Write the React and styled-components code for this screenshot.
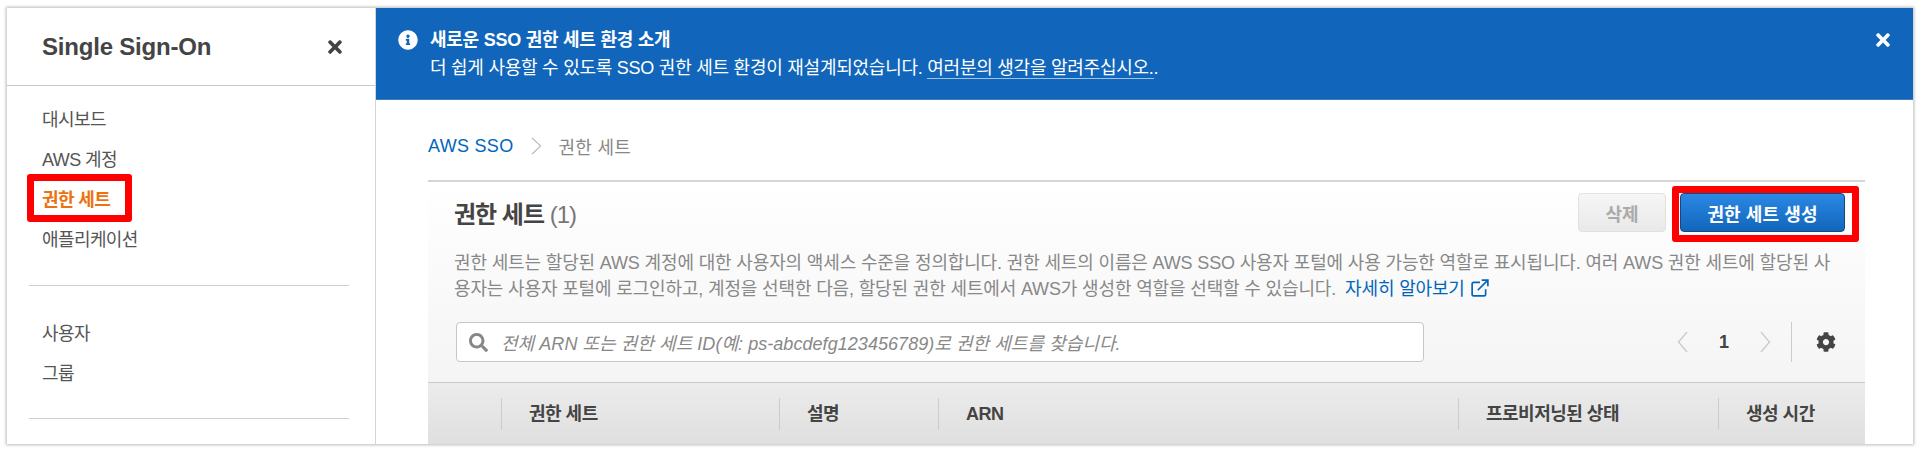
import React from 'react'
import styled, { createGlobalStyle } from 'styled-components'
import { FaTimes, FaInfoCircle, FaSearch, FaCog } from 'react-icons/fa'

const Global = createGlobalStyle`
  html, body {
    margin: 0;
    background: #fff;
  }
  body {
    font-family: "Liberation Sans", "Noto Sans CJK KR", sans-serif;
    color: #444;
  }
`

const Page = styled.div`
  height: 452px;
  padding: 8px 7px;
  box-sizing: border-box;
  overflow: hidden;
`

const Frame = styled.div`
  display: flex;
  height: 436px;
  overflow: hidden;
  box-shadow: 0 0 3px 1px #bbb;
`

const Sidebar = styled.aside`
  width: 368px;
  flex: none;
  border-right: 1px solid #d5d5d5;
`

const SideHeader = styled.div`
  display: flex;
  align-items: center;
  justify-content: space-between;
  height: 78px;
  padding: 0 30px 0 35px;
  box-sizing: border-box;
  border-bottom: 1px solid #c9c9c9;
  color: #444;
  font-size: 24px;
  font-weight: bold;
  letter-spacing: -0.2px;
`

const NavGroup = styled.ul`
  list-style: none;
  margin: 0 26px 0 22px;
  padding: 28px 0 24px;
  border-bottom: 1px solid #d0d0d0;
  &:first-of-type {
    padding: 14px 0 25px;
  }
`

const NavItem = styled.li`
  position: relative;
  height: 40px;
  line-height: 40px;
  padding-left: 13px;
  font-size: 18px;
  letter-spacing: -0.6px;
  color: ${p => (p.$active ? '#ec7211' : '#555')};
  font-weight: ${p => (p.$active ? 'bold' : 'normal')};
  ${p => p.$active && `
    &::after {
      content: '';
      position: absolute;
      left: -2px;
      top: -6px;
      width: 105px;
      height: 48px;
      box-sizing: border-box;
      border: 7px solid #f00;
      border-radius: 3px;
    }
  `}
`

const Main = styled.main`
  flex: 1;
  min-width: 0;
`

const Banner = styled.div`
  display: flex;
  height: 92px;
  box-sizing: border-box;
  padding: 22px 20px 0 22px;
  background: #1166bb;
  border-bottom: 1px solid #3b7dbd;
  color: #fff;
  font-size: 18px;
`

const BannerIcon = styled.div`
  flex: none;
  width: 32px;
  height: 20px;
  font-size: 20px;
  line-height: 20px;
`

const BannerText = styled.div`
  flex: 1;
  line-height: 20px;
  letter-spacing: -0.25px;
`

const BannerTitle = styled.div`
  font-weight: bold;
  margin-bottom: 8px;
`

const BannerLink = styled.span`
  border-bottom: 1px solid #9cc3e8;
`

const Content = styled.div`
  padding: 0 48px 0 52px;
`

const Breadcrumbs = styled.nav`
  display: flex;
  align-items: center;
  height: 80px;
  padding-top: 12px;
  box-sizing: border-box;
  font-size: 18px;
  letter-spacing: 0.3px;
`

const Crumb = styled.span`
  color: ${p => (p.$link ? '#0066bb' : '#888')};
`

const CrumbSep = styled.span`
  display: flex;
  margin: 0 16px 0 18px;
`

const Panel = styled.section`
  border-top: 2px solid #d5d5d5;
  background: linear-gradient(#fff, #f1f1f1);
`

const PanelBody = styled.div`
  padding: 11px 20px 20px 26px;
  border-bottom: 1px solid #c9c9c9;
`

const TitleRow = styled.div`
  display: flex;
  align-items: center;
  height: 39px;
`

const PanelTitle = styled.h2`
  flex: 1;
  margin: 0;
  font-size: 24px;
  font-weight: bold;
  color: #444;
  letter-spacing: -1px;
`

const Count = styled.span`
  font-weight: normal;
  color: #777;
`

const Button = styled.button`
  position: relative;
  height: 39px;
  padding: 0;
  border-radius: 4px;
  font-family: inherit;
  font-size: 18px;
  font-weight: bold;
`

const DeleteButton = styled(Button)`
  width: 88px;
  margin-right: 14px;
  color: #aaa;
  border: 1px solid #e1e1e1;
  background: linear-gradient(#f6f6f6, #e9e9e9);
`

const CreateButton = styled(Button)`
  width: 165px;
  color: #fff;
  border: 1px solid #0d4a87;
  background: linear-gradient(#2b88e4, #1166bb);
  letter-spacing: 0.1px;
  &::after {
    content: '';
    position: absolute;
    left: -9px;
    top: -8px;
    right: -15px;
    bottom: -11px;
    border: 7px solid #f00;
    border-radius: 3px;
  }
`

const Description = styled.p`
  margin: 18px 0 0;
  font-size: 18px;
  line-height: 26px;
  color: #888;
  white-space: nowrap;
  letter-spacing: -0.15px;
`

const MoreLink = styled.span`
  margin-left: 9px;
  color: #0066bb;
`

const ToolRow = styled.div`
  display: flex;
  align-items: center;
  margin: 20px 0 0 2px;
  height: 40px;
`

const Search = styled.div`
  display: flex;
  align-items: center;
  width: 968px;
  height: 40px;
  box-sizing: border-box;
  padding-left: 12px;
  background: #fff;
  border: 1px solid #c6c6c6;
  border-radius: 4px;
  color: #888;
  font-size: 18px;
  font-style: italic;
  letter-spacing: 0.05px;
`

const SearchIcon = styled.span`
  display: flex;
  margin-right: 13px;
  font-size: 19px;
`

const Pager = styled.div`
  display: flex;
  align-items: center;
  margin-left: 253px;
  height: 40px;
  padding-right: 20px;
  border-right: 1px solid #ccc;
  font-size: 18px;
  font-weight: bold;
`

const PageNumber = styled.span`
  width: 80px;
  text-align: center;
  margin: 0 -4px;
`

const Gear = styled.span`
  display: flex;
  margin-left: 24px;
  font-size: 20px;
  color: #444;
`

const TableHead = styled.div`
  display: grid;
  grid-template-columns: 73px 278px 159px 520px 260px 1fr;
  align-items: center;
  height: 61px;
  background: linear-gradient(#ececec, #dfdfdf);
`

const HeadCell = styled.div`
  height: 32px;
  line-height: 32px;
  padding-left: 27px;
  border-left: ${p => (p.$bare ? 'none' : '1px solid #ccc')};
  font-size: 18px;
  font-weight: bold;
  color: #444;
  letter-spacing: -0.5px;
  white-space: nowrap;
`

const Chevron = ({ left, color = '#bbb', w = 11, h = 22 }) => (
  <svg width={w} height={h} viewBox="0 0 11 22" fill="none" preserveAspectRatio="none">
    <path d={left ? 'M10 1L1.5 11L10 21' : 'M1 1L9.5 11L1 21'} stroke={color} strokeWidth="1.4" />
  </svg>
)

const ExternalIcon = () => (
  <svg width="18" height="18" viewBox="0 0 16 16" fill="none" stroke="#0066bb" strokeWidth="1.5" style={{ marginLeft: 6, verticalAlign: -2 }}>
    <path d="M8 3H2.5A1.5 1.5 0 0 0 1 4.5v9A1.5 1.5 0 0 0 2.5 15h9a1.5 1.5 0 0 0 1.5-1.5V9" />
    <path d="M6 10L14.5 1.5M9.5 1h5.5v5.5" />
  </svg>
)

export default function App() {
  return (
    <Page>
      <Global />
      <Frame>
        <Sidebar>
          <SideHeader>
            Single Sign-On
            <FaTimes size={20} />
          </SideHeader>
          <NavGroup>
            <NavItem>대시보드</NavItem>
            <NavItem>AWS 계정</NavItem>
            <NavItem $active>권한 세트</NavItem>
            <NavItem>애플리케이션</NavItem>
          </NavGroup>
          <NavGroup>
            <NavItem>사용자</NavItem>
            <NavItem>그룹</NavItem>
          </NavGroup>
        </Sidebar>
        <Main>
          <Banner>
            <BannerIcon><FaInfoCircle /></BannerIcon>
            <BannerText>
              <BannerTitle>새로운 SSO 권한 세트 환경 소개</BannerTitle>
              더 쉽게 사용할 수 있도록 SSO 권한 세트 환경이 재설계되었습니다. <BannerLink>여러분의 생각을 알려주십시오.</BannerLink>.
            </BannerText>
            <FaTimes size={20} />
          </Banner>
          <Content>
            <Breadcrumbs>
              <Crumb $link>AWS SSO</Crumb>
              <CrumbSep><Chevron w={11} h={18} /></CrumbSep>
              <Crumb>권한 세트</Crumb>
            </Breadcrumbs>
            <Panel>
              <PanelBody>
                <TitleRow>
                  <PanelTitle>권한 세트 <Count>(1)</Count></PanelTitle>
                  <DeleteButton>삭제</DeleteButton>
                  <CreateButton>권한 세트 생성</CreateButton>
                </TitleRow>
                <Description>
                  권한 세트는 할당된 AWS 계정에 대한 사용자의 액세스 수준을 정의합니다. 권한 세트의 이름은 AWS SSO 사용자 포털에 사용 가능한 역할로 표시됩니다. 여러 AWS 권한 세트에 할당된 사<br />
                  용자는 사용자 포털에 로그인하고, 계정을 선택한 다음, 할당된 권한 세트에서 AWS가 생성한 역할을 선택할 수 있습니다.
                  <MoreLink>자세히 알아보기<ExternalIcon /></MoreLink>
                </Description>
                <ToolRow>
                  <Search>
                    <SearchIcon><FaSearch /></SearchIcon>
                    전체 ARN 또는 권한 세트 ID(예: ps-abcdefg123456789)로 권한 세트를 찾습니다.
                  </Search>
                  <Pager>
                    <Chevron left color="#ccc" />
                    <PageNumber>1</PageNumber>
                    <Chevron color="#ccc" />
                  </Pager>
                  <Gear><FaCog /></Gear>
                </ToolRow>
              </PanelBody>
              <TableHead>
                <HeadCell $bare />
                <HeadCell>권한 세트</HeadCell>
                <HeadCell>설명</HeadCell>
                <HeadCell>ARN</HeadCell>
                <HeadCell>프로비저닝된 상태</HeadCell>
                <HeadCell>생성 시간</HeadCell>
              </TableHead>
            </Panel>
          </Content>
        </Main>
      </Frame>
    </Page>
  )
}
